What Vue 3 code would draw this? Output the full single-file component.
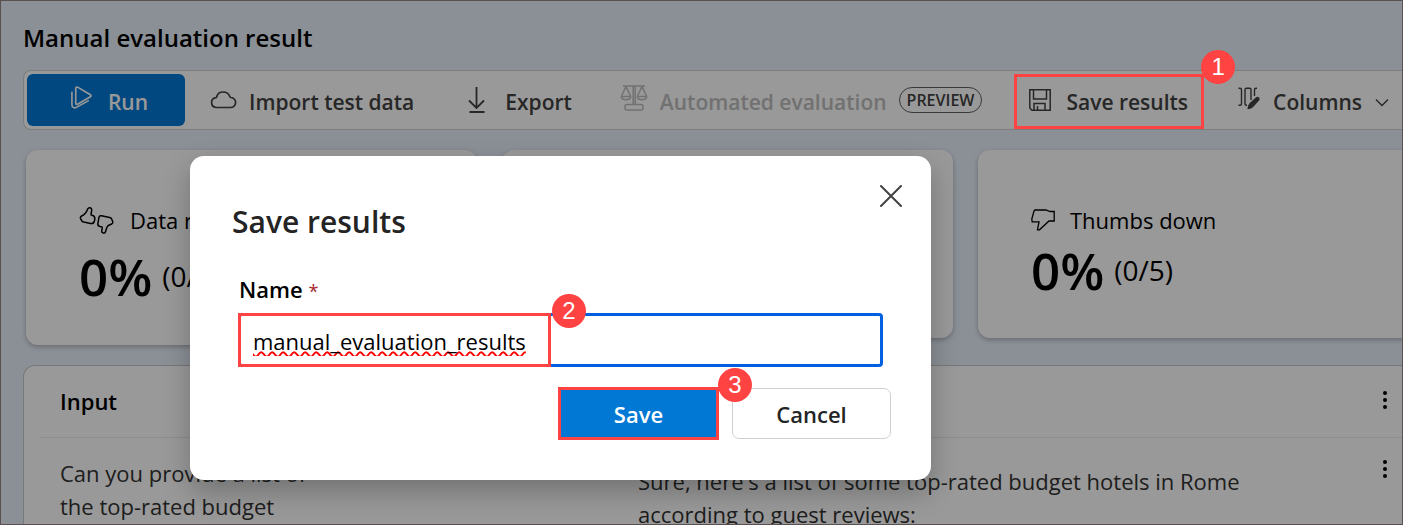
<script setup>
import { ref } from 'vue'

const name = ref('manual_evaluation_results')
</script>

<template>
  <div class="page">
    <main class="workspace">
      <h1 class="title">Manual evaluation result</h1>

      <div class="toolbar" role="toolbar" aria-label="Evaluation actions">
        <button class="tool run" type="button">
          <svg width="23" height="25" viewBox="0 0 24 26" fill="none" stroke="currentColor" stroke-width="1.7" stroke-linejoin="round" stroke-linecap="round">
            <path d="M6 3.400v15.400c0 1.200.9 1.700 1.900 1.200L21.300 12.200c.9-.5.9-1.500 0-2L7.900 2.200C6.900 1.700 6 2.200 6 3.400z" />
            <path d="M2 7.500v13c0 2.600 2.400 4 4.600 2.800L19 16.500" />
          </svg>
          <span>Run</span>
        </button>
        <button class="tool import" type="button">
          <svg width="28" height="18" viewBox="0 0 28 18" fill="none" stroke="currentColor" stroke-width="1.700">
            <path d="M7 16.500h14.200a5 5 0 0 0 .8-10c-.6-.1-1-.3-1.200-.9C19.800 2.800 17.300 1 14.200 1 10.900 1 8.400 3 7.700 5.800c-.1.500-.4.700-.9.800A5 5 0 0 0 7 16.500z" />
          </svg>
          <span>Import test data</span>
        </button>
        <button class="tool export" type="button">
          <svg width="20" height="28" viewBox="0 0 20 28" fill="none" stroke="currentColor" stroke-width="1.800">
            <path d="M9.500 1v21M2 14.500l7.500 7.500 7.500-7.500M2.500 26h15" />
          </svg>
          <span>Export</span>
        </button>
        <button class="tool auto" type="button" disabled>
          <svg width="28" height="28" viewBox="0 0 28 28" fill="none" stroke="currentColor" stroke-width="1.500" stroke-linejoin="round">
            <path d="M3 2h22M13.200 2v18M15.200 2v18M6 2.500L1.500 12v1.500c1 3 8 3 9 0V12L6 2.500M22 2.500L17.500 12v1.500c1 3 8 3 9 0V12L22 2.500M1.500 12.500h9M17.500 12.500h9" />
            <rect x="5" y="20.500" width="18" height="5.500" rx="2" />
          </svg>
          <span>Automated evaluation</span>
        </button>
        <span class="preview">PREVIEW</span>
        <button class="tool save" type="button">
          <svg width="22" height="22" viewBox="0 0 22 22" fill="none" stroke="currentColor" stroke-width="1.500">
            <path d="M.8.800h20.400v20.400H3L.8 19zM4.500 1v9h13V1M5 21v-6.500h11V21M8.500 21v-4" />
          </svg>
          <span>Save results</span>
          <span class="mark" aria-hidden="true"><b class="step">1</b></span>
        </button>
        <button class="tool columns" type="button">
          <svg width="22" height="23" viewBox="0 0 22 23" fill="none" stroke="currentColor" stroke-width="1.400">
            <path d="M.5 1.200h1.500q1.500 0 1.500 1.500v14q0 1.500-1.500 1.500H.5M13 13V2.700q0-1.500-1.500-1.500H8.500Q7 1.200 7 2.700v14q0 1.500 1.500 1.500H9M19 1.200h-1q-1.500 0-1.500 1.500V9" />
            <path d="M9.500 22.200c.2-3 .8-4.700 2.300-6.200l6-5.600c2.200-1.700 5 .8 3.300 3l-5.700 6.300c-1.400 1.500-3.300 2.400-5.900 2.500z" fill="currentColor" stroke="none" />
          </svg>
          <span>Columns</span>
          <svg class="chevron" width="14" height="9" viewBox="0 0 14 9" fill="none" stroke="currentColor" stroke-width="1.400"><path d="M1 1.500l6 6 6-6" /></svg>
        </button>
      </div>

      <section class="cards" aria-label="Scores">
        <article class="card rated">
          <h2 class="card-name">
            <svg width="36" height="29" viewBox="0 0 36 29" fill="none" stroke="currentColor" stroke-width="1.500" stroke-linejoin="round">
              <path d="M8.800 2.800C9.600 1 12.800 1.400 12.700 4c0 1.500-.6 2.700-.7 4.200 0 .6.3 1 .9 1.100 2.200.5 3.200 1.600 2.900 3.700l-.4 2c-.5 2-1.800 2.900-3.900 2.500l-6.700-1.400c-1.200-.3-1.800-.8-2.300-1.800l-.9-1.700c-.5-1.200 0-2.100 1.100-2.600C6.300 8.500 7.300 7 8.800 2.800z" />
              <path d="M20 11.200c.3-1.200 1.200-1.700 2.500-1.400l8.200 1.800c1.200.3 1.800.8 2.200 1.900l.8 2c.4 1.200.1 2-1 2.500l-2.900 1.300c-1.300.6-1.700 1.500-2.100 2.800l-1.200 3.600c-.7 2.200-4.100 1.500-3.800-.8l.6-3c.1-.6-.2-1-.8-1.100l-1.500-.3c-1.700-.4-2.400-1.500-2.100-3.200z" />
            </svg>
            Data rated
          </h2>
          <p class="score"><strong>0%</strong> <span>(0/5)</span></p>
        </article>
        <article class="card"></article>
        <article class="card">
          <h2 class="card-name down">
            <svg width="24" height="22" viewBox="0 0 24 22" fill="none" stroke="currentColor" stroke-width="1.300">
              <path d="M3 2l1-1h11l4 1.500h4.200V12h-5.200L8.500 20.800h-2L8 12.800H1.200L.8 10z" />
            </svg>
            Thumbs down
          </h2>
          <p class="score"><strong>0%</strong> <span>(0/5)</span></p>
        </article>
      </section>

      <section class="panel">
        <table>
          <thead>
            <tr>
              <th class="input-col" scope="col">Input</th>
              <td></td>
              <td class="menu-col">
                <button class="more" type="button" aria-label="Column options"><i></i><i></i><i></i></button>
              </td>
            </tr>
          </thead>
          <tbody>
            <tr>
              <td><p class="prompt">Can you provide a list of the top-rated budget</p></td>
              <td class="output"><p class="answer">Sure, here's a list of some top-rated budget hotels in Rome according to guest reviews:</p></td>
              <td class="menu-col">
                <button class="more" type="button" aria-label="Row options"><i></i><i></i><i></i></button>
              </td>
            </tr>
          </tbody>
        </table>
      </section>
    </main>

    <div class="scrim">
      <form class="dialog" role="dialog" aria-labelledby="dialog-title" @submit.prevent>
        <header class="dialog-head">
          <h2 id="dialog-title">Save results</h2>
          <button class="close" type="button" aria-label="Close">
            <svg width="22" height="22" viewBox="0 0 22 22" fill="none" stroke="currentColor" stroke-width="2" stroke-linecap="round"><path d="M1 1l20 20M21 1L1 21" /></svg>
          </button>
        </header>
        <label for="result-name">Name <span class="required">*</span></label>
        <div class="field">
          <input id="result-name" v-model="name" type="text" required />
          <span class="mark name-mark" aria-hidden="true"><b class="step">2</b></span>
        </div>
        <footer class="actions">
          <button class="action primary" type="submit">Save<span class="mark" aria-hidden="true"><b class="step">3</b></span></button>
          <button class="action" type="button">Cancel</button>
        </footer>
      </form>
    </div>
  </div>
</template>

<style>
body {
  margin: 0;
}
</style>

<style scoped>
* {
  box-sizing: border-box;
}
.page {
  position: relative;
  height: 100vh;
  overflow: hidden;
  background: #e8f0fb;
  font-family: "Open Sans", "Noto Sans", sans-serif;
  font-size: 22px;
  color: #000;
}
.page::after {
  content: "";
  position: absolute;
  inset: 0;
  border: 1px solid #5b5050;
  z-index: 4;
  pointer-events: none;
}
button,
input {
  font: inherit;
  color: inherit;
}
h1,
h2,
p {
  margin: 0;
  font-weight: 400;
}
.workspace {
  padding: 20px 0 0 23px;
}
.title {
  font-size: 24px;
  line-height: 36px;
  font-weight: 600;
}
.toolbar {
  display: flex;
  align-items: center;
  height: 60px;
  margin-top: 14px;
  padding: 3px;
  border: 1px solid #d1d1d1;
  border-right: 0;
  border-radius: 8px 0 0 8px;
  background: #fff;
  color: #424242;
}
.tool {
  position: relative;
  display: flex;
  flex: none;
  align-items: center;
  height: 52px;
  padding: 0;
  border: 0;
  background: none;
  font-size: 21px;
  font-weight: 600;
  white-space: nowrap;
}
.tool span {
  padding-top: 4px;
}
.run {
  width: 158px;
  justify-content: center;
  gap: 15px;
  padding-left: 6px;
  border-radius: 6px;
  background: #0078d4;
  color: #fff;
}
.run svg {
  margin-bottom: 6px;
}
.import {
  gap: 12px;
  margin-left: 24px;
}
.export {
  gap: 18px;
  margin-left: 53px;
}
.auto {
  gap: 12px;
  margin-left: 48px;
  color: #bdbdbd;
}
.auto svg,
.columns svg {
  margin-bottom: 4px;
}
.preview {
  flex: none;
  height: 26px;
  margin-left: 12px;
  padding: 0 7px;
  border: 1px solid #616161;
  border-radius: 13px;
  font-size: 16px;
  line-height: 24px;
  font-weight: 600;
}
.save {
  gap: 15px;
  margin-left: 32px;
  padding: 0 16px 0 15px;
}
.columns {
  gap: 13px;
  margin-left: 34px;
}
.columns .chevron {
  margin: 4px 0 0;
}
.mark {
  position: absolute;
  inset: 0;
  border: 3px solid #ff4343;
  z-index: 3;
}
.save .mark {
  inset: 0 0 -3px;
}
.step {
  position: absolute;
  top: -27px;
  right: -34px;
  width: 34px;
  height: 34px;
  border-radius: 50%;
  background: #ff4343;
  color: #fff;
  font: 400 24px/34px "Liberation Sans", Arial, sans-serif;
  text-align: center;
}
.cards {
  display: grid;
  grid-template-columns: repeat(3, 451px);
  align-items: start;
  gap: 25px;
  margin: 20px 0 0 3px;
}
.card {
  height: 188px;
  padding: 52px 53px;
  border-radius: 12px;
  background: #fff;
  box-shadow: 0 2px 5px rgba(0, 0, 0, 0.25);
}
.rated {
  height: 195px;
}
.card-name {
  display: flex;
  align-items: center;
  gap: 15px;
  height: 36px;
  font-size: 22px;
  white-space: nowrap;
}
.score {
  display: flex;
  align-items: center;
  gap: 10px;
  height: 64px;
  font-size: 28px;
}
.rated .score {
  height: 76px;
}
.score strong {
  font-size: 51px;
  font-weight: 600;
}
.panel {
  height: 200px;
  margin-top: 20px;
  padding-left: 16px;
  border: 1px solid #c8c8c8;
  border-right: 0;
  border-radius: 12px 0 0 0;
  background: #fff;
}
table {
  width: 100%;
  border-collapse: collapse;
  table-layout: fixed;
}
th,
td {
  padding: 0;
  text-align: left;
  vertical-align: top;
}
thead th,
thead td {
  height: 71px;
  border-bottom: 1px solid #ebebeb;
  vertical-align: middle;
}
thead td {
  padding-bottom: 2px;
}
th {
  font-weight: 600;
}
.input-col {
  width: 598px;
  padding-left: 20px;
}
.menu-col {
  width: 36px;
}
tbody p {
  line-height: 33px;
  color: #333;
}
.prompt {
  width: 270px;
  margin: 19px 0 0 20px;
}
.answer {
  max-width: 620px;
  margin-top: 27px;
}
.more {
  display: flex;
  flex-direction: column;
  align-items: center;
  gap: 3px;
  width: 36px;
  padding: 0;
  border: 0;
  background: none;
}
tbody .more {
  margin-top: 22px;
}
.more i {
  width: 4px;
  height: 4px;
  border-radius: 50%;
  background: #000;
}
.scrim {
  position: absolute;
  inset: 0;
  z-index: 1;
  display: flex;
  align-items: flex-start;
  padding: 156px 190px 0;
  background: rgba(0, 0, 0, 0.4);
}
.dialog {
  width: 741px;
  padding: 28px 28px 41px 42px;
  border-radius: 14px;
  background: #fff;
  box-shadow: 0 12px 28px rgba(0, 0, 0, 0.25);
}
.dialog-head {
  display: flex;
  align-items: flex-start;
  justify-content: space-between;
}
.dialog-head h2 {
  padding-top: 16px;
  font-size: 30px;
  line-height: 44px;
  font-weight: 600;
  color: #242424;
}
.close {
  display: flex;
  padding: 1px;
  border: 0;
  background: none;
  color: #424242;
}
.dialog label {
  display: block;
  margin: 29px 0 0 7px;
  line-height: 32px;
  font-weight: 600;
}
.required {
  color: #a4262c;
  font-size: 18px;
  font-weight: 400;
}
.field {
  position: relative;
  margin: 6px 20px 0 6px;
}
.field input {
  display: block;
  width: 100%;
  height: 54px;
  padding: 2px 12px 0;
  border: 3px solid #0060df;
  border-radius: 4px;
  outline: 0;
  background: #fff;
  text-decoration: underline wavy 2px #f00;
}
.name-mark {
  right: auto;
  width: 313px;
}
.name-mark .step {
  top: -22px;
  right: -38px;
}
.actions {
  display: flex;
  justify-content: flex-end;
  gap: 14px;
  margin: 21px 12px 0 0;
}
.action {
  position: relative;
  width: 159px;
  height: 51px;
  padding: 0;
  border: 1px solid #d1d1d1;
  border-radius: 7px;
  background: #fff;
  color: #242424;
  font-weight: 600;
}
.primary {
  border: 0;
  background: #0078d4;
  color: #fff;
}
.primary .mark {
  inset: -1px;
}
.primary .step {
  top: -22px;
  right: -36px;
}
</style>
